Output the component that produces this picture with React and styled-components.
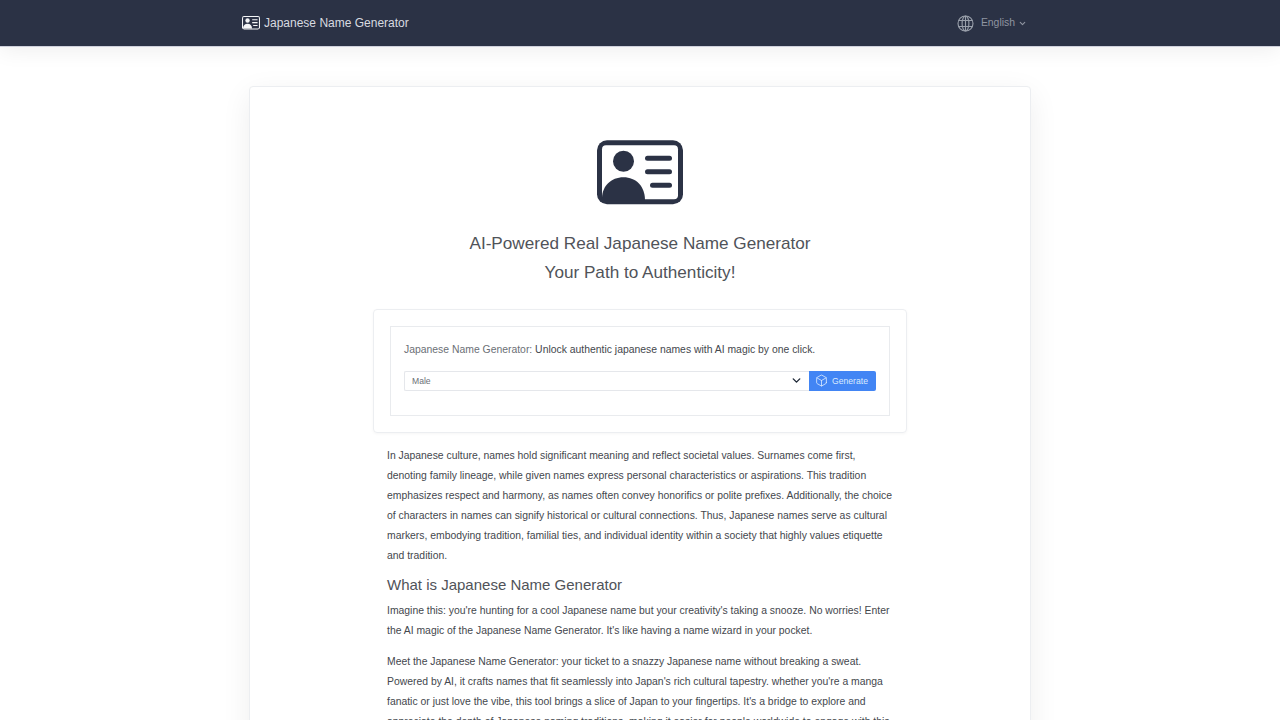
import React from "react";
import styled, { createGlobalStyle } from "styled-components";
import { FiBox, FiChevronDown } from "react-icons/fi";

const Global = createGlobalStyle`
  html, body {
    margin: 0;
    padding: 0;
    height: 720px;
    overflow: hidden;
    background: #fff;
    font-family: "Liberation Sans", Arial, sans-serif;
    color: #4a4a4a;
  }
  * { box-sizing: border-box; }
`;

function IdCard({ size, body, face }) {
  return (
    <svg width={size} height={size * 0.75} viewBox="0 0 86 64">
      <rect x="0" y="0" width="86" height="64" rx="10" fill={body} />
      <rect x="5" y="5" width="76" height="54" rx="4" fill={face} />
      <circle cx="26.5" cy="21" r="10.5" fill={body} />
      <path d="M5 60 V58 C5 46 14 37 26.5 37 C39 37 48 46 48 60 Z" fill={body} />
      <rect x="48" y="15.5" width="27" height="5" rx="2.5" fill={body} />
      <rect x="48" y="29" width="27" height="5" rx="2.5" fill={body} />
      <rect x="53" y="42.5" width="22" height="5" rx="2.5" fill={body} />
    </svg>
  );
}

function Globe() {
  return (
    <svg width="17" height="17" viewBox="0 0 17 17" fill="none" stroke="#9aa0ab" strokeWidth="1.1">
      <circle cx="8.5" cy="8.5" r="7.5" />
      <ellipse cx="8.5" cy="8.5" rx="3.4" ry="7.5" />
      <path d="M8.5 1v15M1.6 5.5h13.8M1.6 11.5h13.8" />
    </svg>
  );
}

export default function App() {
  return (
    <>
      <Global />
      <Navbar>
        <Brand>
          <IdCard size={18} body="#f3f4f6" face="#2b3245" />
          <span>Japanese Name Generator</span>
        </Brand>
        <Lang>
          <Globe />
          <LangLabel>English</LangLabel>
          <FiChevronDown size={9} strokeWidth={3} />
        </Lang>
      </Navbar>
      <Card>
        <Hero>
          <IdCard size={86} body="#2b3245" face="#fff" />
          <Title>
            AI-Powered Real Japanese Name Generator
            <br />
            Your Path to Authenticity!
          </Title>
        </Hero>
        <Outer>
          <Inner>
            <Lead>
              <Muted>Japanese Name Generator:</Muted> Unlock authentic japanese names with AI magic by one click.
            </Lead>
            <FormRow>
              <Select>
                <span>Male</span>
                <FiChevronDown size={13} strokeWidth={2.6} color="#1f2937" />
              </Select>
              <Generate>
                <FiBox size={13} strokeWidth={1.5} />
                Generate
              </Generate>
            </FormRow>
          </Inner>
        </Outer>
        <Article>
          <Para>
            In Japanese culture, names hold significant meaning and reflect societal values. Surnames come first,
            <br />
            denoting family lineage, while given names express personal characteristics or aspirations. This tradition
            <br />
            emphasizes respect and harmony, as names often convey honorifics or polite prefixes. Additionally, the choice
            <br />
            of characters in names can signify historical or cultural connections. Thus, Japanese names serve as cultural
            <br />
            markers, embodying tradition, familial ties, and individual identity within a society that highly values etiquette
            <br />
            and tradition.
          </Para>
          <Heading>What is Japanese Name Generator</Heading>
          <Para>
            Imagine this: you're hunting for a cool Japanese name but your creativity's taking a snooze. No worries! Enter
            <br />
            the AI magic of the Japanese Name Generator. It's like having a name wizard in your pocket.
          </Para>
          <Para>
            Meet the Japanese Name Generator: your ticket to a snazzy Japanese name without breaking a sweat.
            <br />
            Powered by AI, it crafts names that fit seamlessly into Japan's rich cultural tapestry. whether you're a manga
            <br />
            fanatic or just love the vibe, this tool brings a slice of Japan to your fingertips. It's a bridge to explore and
            <br />
            appreciate the depth of Japanese naming traditions, making it easier for people worldwide to engage with this
          </Para>
        </Article>
      </Card>
    </>
  );
}

const Navbar = styled.header`
  height: 46px;
  background: #2b3245;
  display: flex;
  align-items: center;
  justify-content: space-between;
  padding: 0 253px 0 242px;
  box-shadow: 0 1px 0 #cfd1dc, 0 4px 22px rgba(0, 0, 0, 0.07);
`;

const Brand = styled.div`
  display: flex;
  align-items: center;
  gap: 4px;
  color: #d9dbe0;
  font-size: 12px;
  line-height: 44px;
`;

const Lang = styled.div`
  display: flex;
  align-items: center;
  color: #8f95a1;
  font-size: 10.4px;
  line-height: 44px;
`;

const LangLabel = styled.span`
  margin: 0 3px 0 7px;
`;

const Card = styled.main`
  width: 782px;
  margin: 40px 0 0 249px;
  padding: 53px 123px 0;
  background: #fff;
  border: 1px solid #eceef1;
  border-radius: 4px;
  box-shadow: 0 8px 30px rgba(0, 0, 0, 0.07);
`;

const Hero = styled.div`
  display: flex;
  flex-direction: column;
  align-items: center;
`;

const Title = styled.h1`
  margin: 24px 0 22px;
  font-size: 17.15px;
  line-height: 29px;
  font-weight: 400;
  text-align: center;
  color: #505359;
`;

const Outer = styled.section`
  padding: 16px;
  border: 1px solid #eceef1;
  border-radius: 4px;
  box-shadow: 0 1px 3px rgba(0, 0, 0, 0.04);
`;

const Inner = styled.div`
  height: 90px;
  padding: 16px 13px;
  border: 1px solid #e9ebee;
`;

const Lead = styled.p`
  margin: 0 0 14px;
  font-size: 10.4px;
  line-height: 14px;
  color: #44474d;
`;

const Muted = styled.span`
  color: #6b6f76;
`;

const FormRow = styled.div`
  display: flex;
  height: 20px;
`;

const Select = styled.div`
  flex: 1;
  display: flex;
  align-items: center;
  justify-content: space-between;
  padding: 0 6px 0 7px;
  font-size: 8.6px;
  color: #6b6f76;
  border: 1px solid #e5e7eb;
  border-right: none;
  border-radius: 2px 0 0 2px;
`;

const Generate = styled.div`
  width: 67px;
  display: flex;
  align-items: center;
  justify-content: center;
  gap: 4px;
  padding-right: 2px;
  font-size: 8.6px;
  color: #dbeafe;
  background: #4285f4;
  border-radius: 0 2px 2px 0;
`;

const Article = styled.article`
  padding: 13px 14px 0;
`;

const Para = styled.p`
  margin: 0 0 11px;
  font-size: 10.4px;
  line-height: 20px;
  white-space: nowrap;
  color: #44474d;
`;

const Heading = styled.h2`
  margin: -2px 0 6px;
  font-size: 15px;
  line-height: 20px;
  font-weight: 400;
  color: #505359;
`;
